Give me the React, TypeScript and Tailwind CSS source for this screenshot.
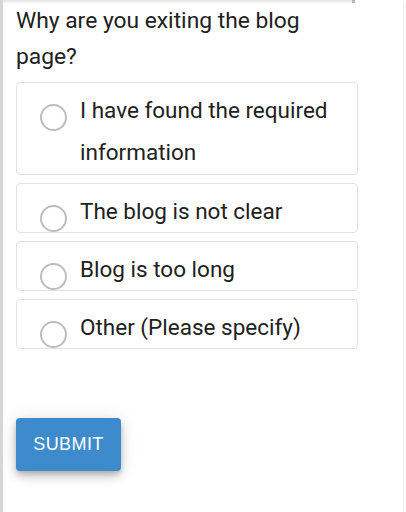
import { useState } from 'react';

const OPTIONS = [
  'I have found the required information',
  'The blog is not clear',
  'Blog is too long',
  'Other (Please specify)',
];

function RadioOption({
  label,
  checked,
  onSelect,
}: {
  label: string;
  checked: boolean;
  onSelect: () => void;
}) {
  return (
    <label className="flex items-start w-[342px] rounded-[4px] border border-[#e2e2e2] pt-[6px] first:pb-[1px] pl-[23px] pr-3 cursor-pointer">
      <input type="radio" className="hidden" checked={checked} onChange={onSelect} />
      <span className="mt-[15px] shrink-0 w-[27px] h-[27px] rounded-full border-2 border-[#bdbdbd] flex items-center justify-center">
        {checked && <span className="w-[13px] h-[13px] rounded-full bg-[#3d8bcd]" />}
      </span>
      <span className="ml-[13px] text-[22.5px] leading-[42px] text-[#212121]">{label}</span>
    </label>
  );
}

export default function App() {
  const [selected, setSelected] = useState<number | null>(null);

  return (
    <div className="w-[406px] h-[512px] bg-white flex flex-col border-l-[3px] border-[#d6d6d6] font-['Roboto','Liberation_Sans',sans-serif] overflow-hidden">
      <div className="flex h-[3px] shrink-0">
        <div className="w-[349px] bg-gradient-to-b from-[#e6e6e6] to-[#f7f7f7]" />
        <div className="w-[3px] bg-[#b8b8b8]" />
      </div>
      <div className="w-[401px] flex-1 border-r border-[#ededed] pl-[13px] flex flex-col">
        <h2 className="w-[342px] text-[22.8px] leading-[36px] text-[#212121] font-normal">
          Why are you exiting the blog page?
        </h2>
        <div className="mt-[7px] flex flex-col gap-2">
          {OPTIONS.map((opt, i) => (
            <RadioOption
              key={opt}
              label={opt}
              checked={selected === i}
              onSelect={() => {
                setSelected(i);
              }}
            />
          ))}
        </div>
        <div className="mt-[69px]">
          <button className="w-[105px] h-[53px] rounded-[4px] bg-[#3d8bcd] text-white text-[18px] font-['Liberation_Sans',sans-serif] tracking-[0.4px] uppercase shadow-[0_3px_5px_-1px_rgba(0,0,0,0.2),0_6px_10px_0_rgba(0,0,0,0.14),0_1px_18px_0_rgba(0,0,0,0.12)]">
            Submit
          </button>
        </div>
      </div>
    </div>
  );
}
